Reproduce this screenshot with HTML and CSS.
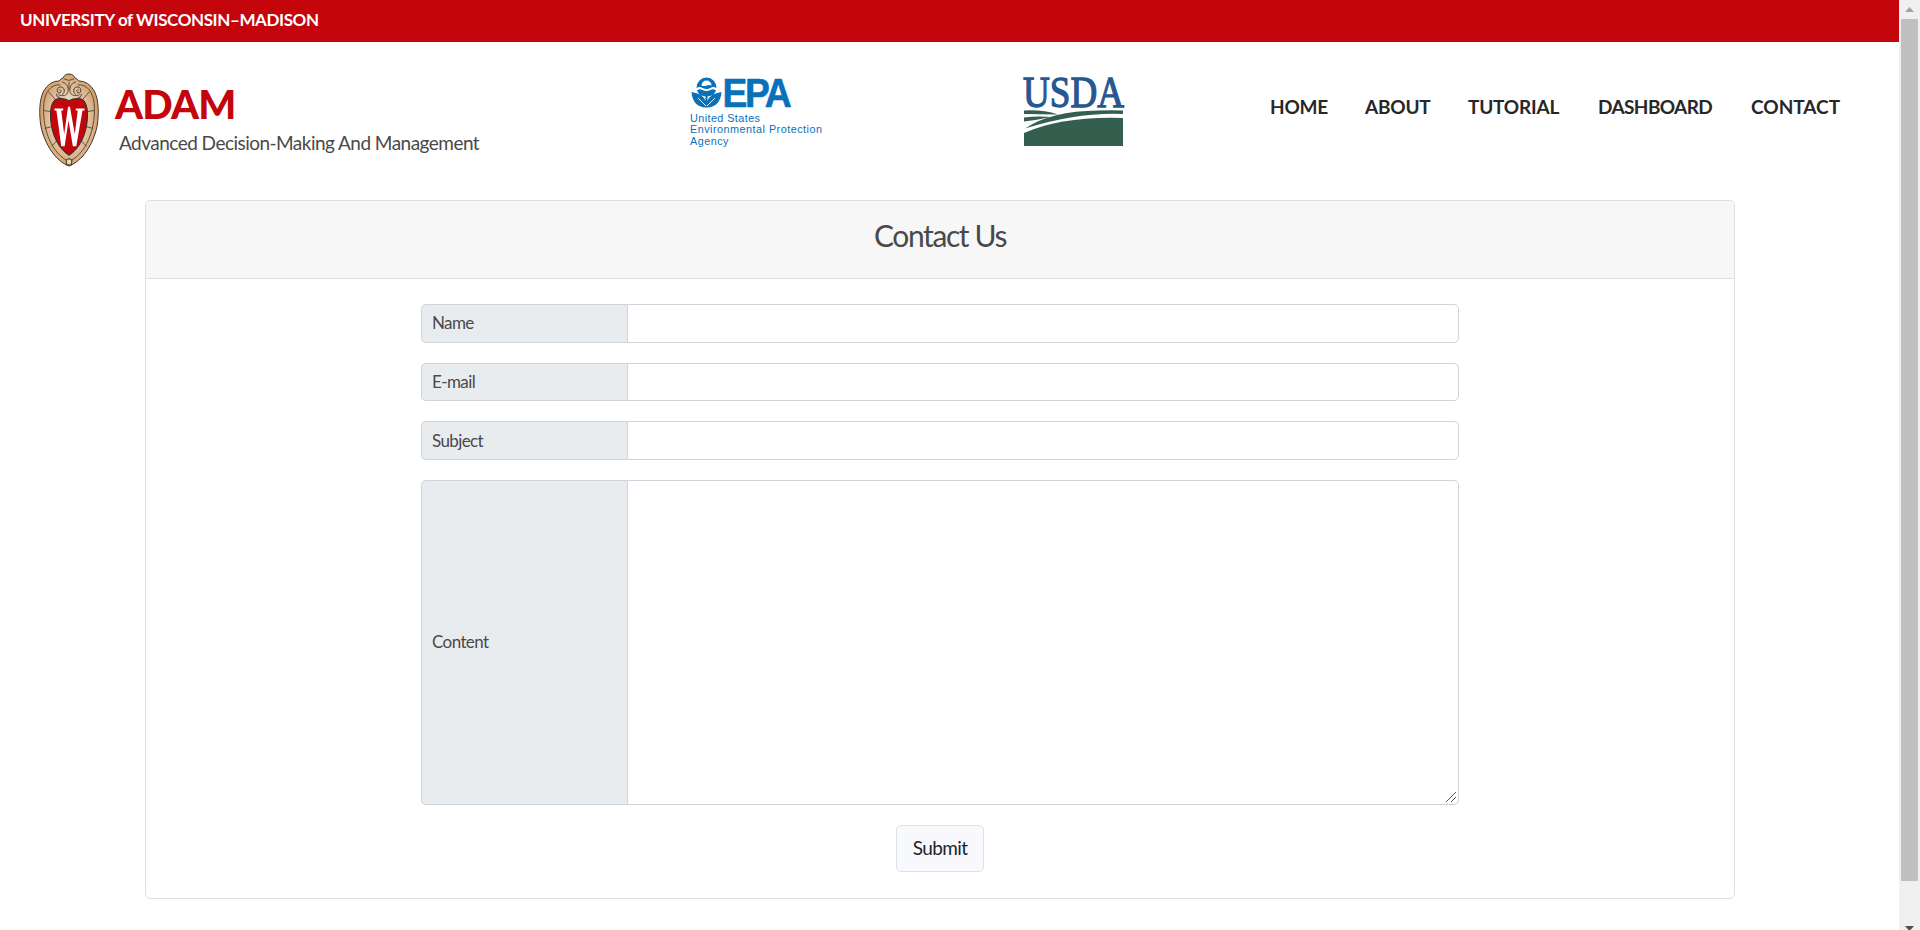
FILE: index.html
```html
<!DOCTYPE html>
<html lang="en">
<head>
<meta charset="utf-8">
<title>ADAM - Contact Us</title>
<link rel="stylesheet" href="styles.css">
</head>
<body>
<div class="page">
  <div class="topbar"><span class="univ">UNIVERSITY of WISCONSIN–MADISON</span></div>
  <header class="header">
    <svg class="crest" width="60" height="94" viewBox="0 0 62 95" preserveAspectRatio="none">
      <defs><radialGradient id="tan"><stop offset=".4" stop-color="#eddcc5"/><stop offset="1" stop-color="#d3a16d"/></radialGradient></defs>
      <g fill="url(#tan)" stroke="#39332e" stroke-width="1">
        <path d="M31 1C27 1 26 3 25 5Q22 6 21 8Q11 8 5 18C0 27 0 42 2 54C6 72 17 89 31 94C45 89 56 72 60 54C62 42 62 27 57 18Q51 8 41 8Q40 6 37 5C36 3 35 1 31 1Z"/>
        <path fill="none" stroke-width=".8" d="M22 12C12 11 6 20 5 31C3 53 11 78 28 88M40 12C50 11 56 20 57 31C59 53 51 78 34 88M26 6Q31 9 36 6M31 9V17M24 9Q31 11 30 19Q28 25 20 22M38 9Q31 11 32 19Q34 25 42 22M10 19L18 28M52 19L44 28M5 38L13 39M57 38L49 39M6 56L14 54M56 56L48 54M13 74L20 67M49 74L42 67"/>
        <path fill="none" stroke-width=".9" d="M24 22Q27 20 26 16Q22 12 19 16Q18 21 22 20Q24 17 21 17M38 22Q35 20 36 16Q40 12 43 16Q44 21 40 20Q38 17 41 17M18 21Q18 25 22 25M44 21Q44 25 40 25"/>
        <path d="M28 88Q31 85 34 88L33.500 93H28.500Z"/>
      </g>
      <path d="M31 28Q26 25 19 26C13 28 11.500 37 12 46C13 62 20 76 31 83C42 76 49 62 50 46C50.500 37 49 28 43 26Q36 25 31 28Z" fill="#c5050c" stroke="#39332e" stroke-width="1.2"/>
      <path d="M16 36H25V38H23L26 62L30 34H32L37 62L40 38H38V36H47V38H45L38.500 74H35L30.500 48L26.500 74H23L18 38H16Z" fill="#fff"/>
    </svg>
    <div class="brand"><div class="name">ADAM</div><div class="tagline">Advanced Decision-Making And Management</div></div>
    <svg class="epa" width="140" height="80" viewBox="0 0 140 80" fill="#0871ba">
      <path d="M6.500 12A10 10.500 0 1 1 26.500 12Q23 10 20.500 12Q16.500 14 12.500 12Q10 10 6.500 12Z"/>
      <path d="M11.500 9.500A5 5 0 1 1 21.500 9.500Q19 8.500 16.500 9.500Q14 10.500 11.500 9.500Z" fill="#fff"/>
      <path d="M7 14.500Q10 12.500 12.500 14Q16.500 16 20.500 14Q23 12.500 26 14.500C25 18 22 20 17.500 20.500V25Q20 17.500 31.500 16C31 25 26 31.500 17 31.500H16C7 31.500 2 25 1.500 16Q13 17.500 15.500 25V20.500C11 20 8 18 7 14.500Z"/>
      <path d="M16 30L8 22M17 30L25 22" stroke="#fff" stroke-width=".9"/>
      <text class="epa-big" x="32.500" y="30.500" textLength="67" lengthAdjust="spacingAndGlyphs">EPA</text>
      <g class="epa-small"><text x="0" y="46.300" textLength="70">United States</text><text x="0" y="57.300" textLength="132">Environmental Protection</text><text x="0" y="68.500" textLength="38.500">Agency</text></g>
    </svg>
    <svg class="usda" width="102" height="74" viewBox="0 0 102 74">
      <text class="usda-text" x="0" y="31" textLength="101" lengthAdjust="spacingAndGlyphs">USDA</text>
      <g fill="#345f4e"><path d="M1 34.500Q20 33.500 35 38.500Q18 38 1 38Z"/><path d="M1 41.500Q14 40 28 41Q14 44 1 45.500Z"/><path d="M2 52.500Q28 35 75 34.500Q88 34 100 34.500V38Q55 36 2 52.500Z"/><path d="M1 57Q40 40 100 42V70H1Z"/></g>
    </svg>
    <nav class="nav"><a class="n1">HOME</a><a class="n2">ABOUT</a><a class="n3">TUTORIAL</a><a class="n4">DASHBOARD</a><a class="n5">CONTACT</a></nav>
  </header>
  <main class="card">
    <div class="card-header"><h1>Contact Us</h1></div>
    <form class="form">
      <div class="group"><label>Name</label><input type="text"></div>
      <div class="group"><label>E-mail</label><input type="text"></div>
      <div class="group"><label>Subject</label><input type="text"></div>
      <div class="group tall"><label>Content</label><textarea></textarea>
        <svg class="grip" width="12" height="12" viewBox="0 0 12 12"><path d="M1 11L11 1M6 11L11 6" stroke="#555" stroke-width="1"/></svg>
      </div>
      <button class="submit" type="button">Submit</button>
    </form>
  </main>
</div>
<div class="scrollbar">
  <svg class="up" width="9" height="5" viewBox="0 0 9 5"><path d="M0 5L4.500 0L9 5Z" fill="#a3a3a3"/></svg>
  <div class="thumb"></div>
  <svg class="down" width="9" height="5" viewBox="0 0 9 5"><path d="M0 0L4.500 5L9 0Z" fill="#505050"/></svg>
</div>
</body>
</html>
```
FILE: styles.css
```css
* { box-sizing: border-box; }
body { margin: 0; width: 1920px; height: 930px; display: flex; overflow: hidden; background: #fff; font-family: Lato, "Open Sans", sans-serif; color: #494949; }
.page { width: 1899px; height: 930px; }
.topbar { height: 42px; background: #c5050c; padding: 0 20px; line-height: 40px; }
.univ { color: #fff; font-size: 17px; font-weight: 700; letter-spacing: -0.4px; }
.header { height: 158px; display: flex; align-items: flex-start; padding-left: 39px; white-space: nowrap; }
.crest { margin-top: 31px; flex: none; }
.brand { width: 575px; margin-left: 16px; padding-top: 38px; }
.name { font-size: 40px; line-height: 48px; font-weight: 900; color: #c5050c; letter-spacing: -0.8px; }
.tagline { margin: 2px 0 0 4px; font-size: 19px; line-height: 26px; letter-spacing: -0.53px; }
.epa { margin-top: 34px; flex: none; overflow: visible; }
.epa-big { font: bold 41px "Liberation Sans", sans-serif; letter-spacing: -2.5px; stroke: #0871ba; stroke-width: .6px; }
.epa-small { font: 10.8px "Liberation Sans", sans-serif; }
.usda { margin: 34px 0 0 193px; flex: none; overflow: visible; }
.usda-text { font: 45px "Liberation Serif", serif; fill: #28578f; stroke: #28578f; stroke-width: 1.3px; }
.nav { display: flex; margin: 52px 0 0 145px; color: #282728; font-size: 19px; line-height: 26px; font-weight: 700; letter-spacing: -0.2px; }
.n1 { width: 95px; }
.n2 { width: 103px; }
.n3 { width: 130px; }
.n4 { width: 153px; letter-spacing: -0.6px; }
.n5 { width: 93px; letter-spacing: 0; }
.card { width: 1590px; height: 699px; margin-left: 145px; border: 1px solid #dfdfdf; border-radius: 5px; }
.card-header { height: 78px; background: #f7f7f7; border-bottom: 1px solid #dfdfdf; border-radius: 4px 4px 0 0; padding-top: 14px; }
h1 { margin: 0; text-align: center; font-size: 30px; line-height: 40px; font-weight: 400; letter-spacing: -1.4px; }
.form { width: 1038px; margin: 25px auto 0; display: flex; flex-direction: column; gap: 19.7px; }
.group { position: relative; display: flex; height: 38.9px; }
.group.tall { height: 325.5px; }
.group label { width: 206px; display: flex; align-items: center; padding: 0 0 1.2px 10px; background: #e8ecef; border: 1px solid #ced4da; border-right: 0; border-radius: 5px 0 0 5px; font-size: 17px; letter-spacing: -0.6px; }
.group input, .group textarea { flex: 1; min-width: 0; margin: 0; border: 1px solid #ced4da; border-radius: 0 5px 5px 0; background: #fff; outline: 0; resize: none; }
.grip { position: absolute; right: 2px; bottom: 2px; }
.submit { width: 88px; height: 47px; align-self: center; border: 1px solid #dee2e6; border-radius: 5px; background: #f8f9fc; color: #212529; font: 19px Lato, sans-serif; letter-spacing: -0.6px; padding: 0 0 2px; }
.scrollbar { width: 21px; height: 930px; background: #f0f0f0; display: flex; flex-direction: column; align-items: center; padding-top: 7px; }
.thumb { width: 17px; height: 862px; margin: 7px 0 45px; background: #c0c0c0; flex: none; }
.up, .down { flex: none; }
```
